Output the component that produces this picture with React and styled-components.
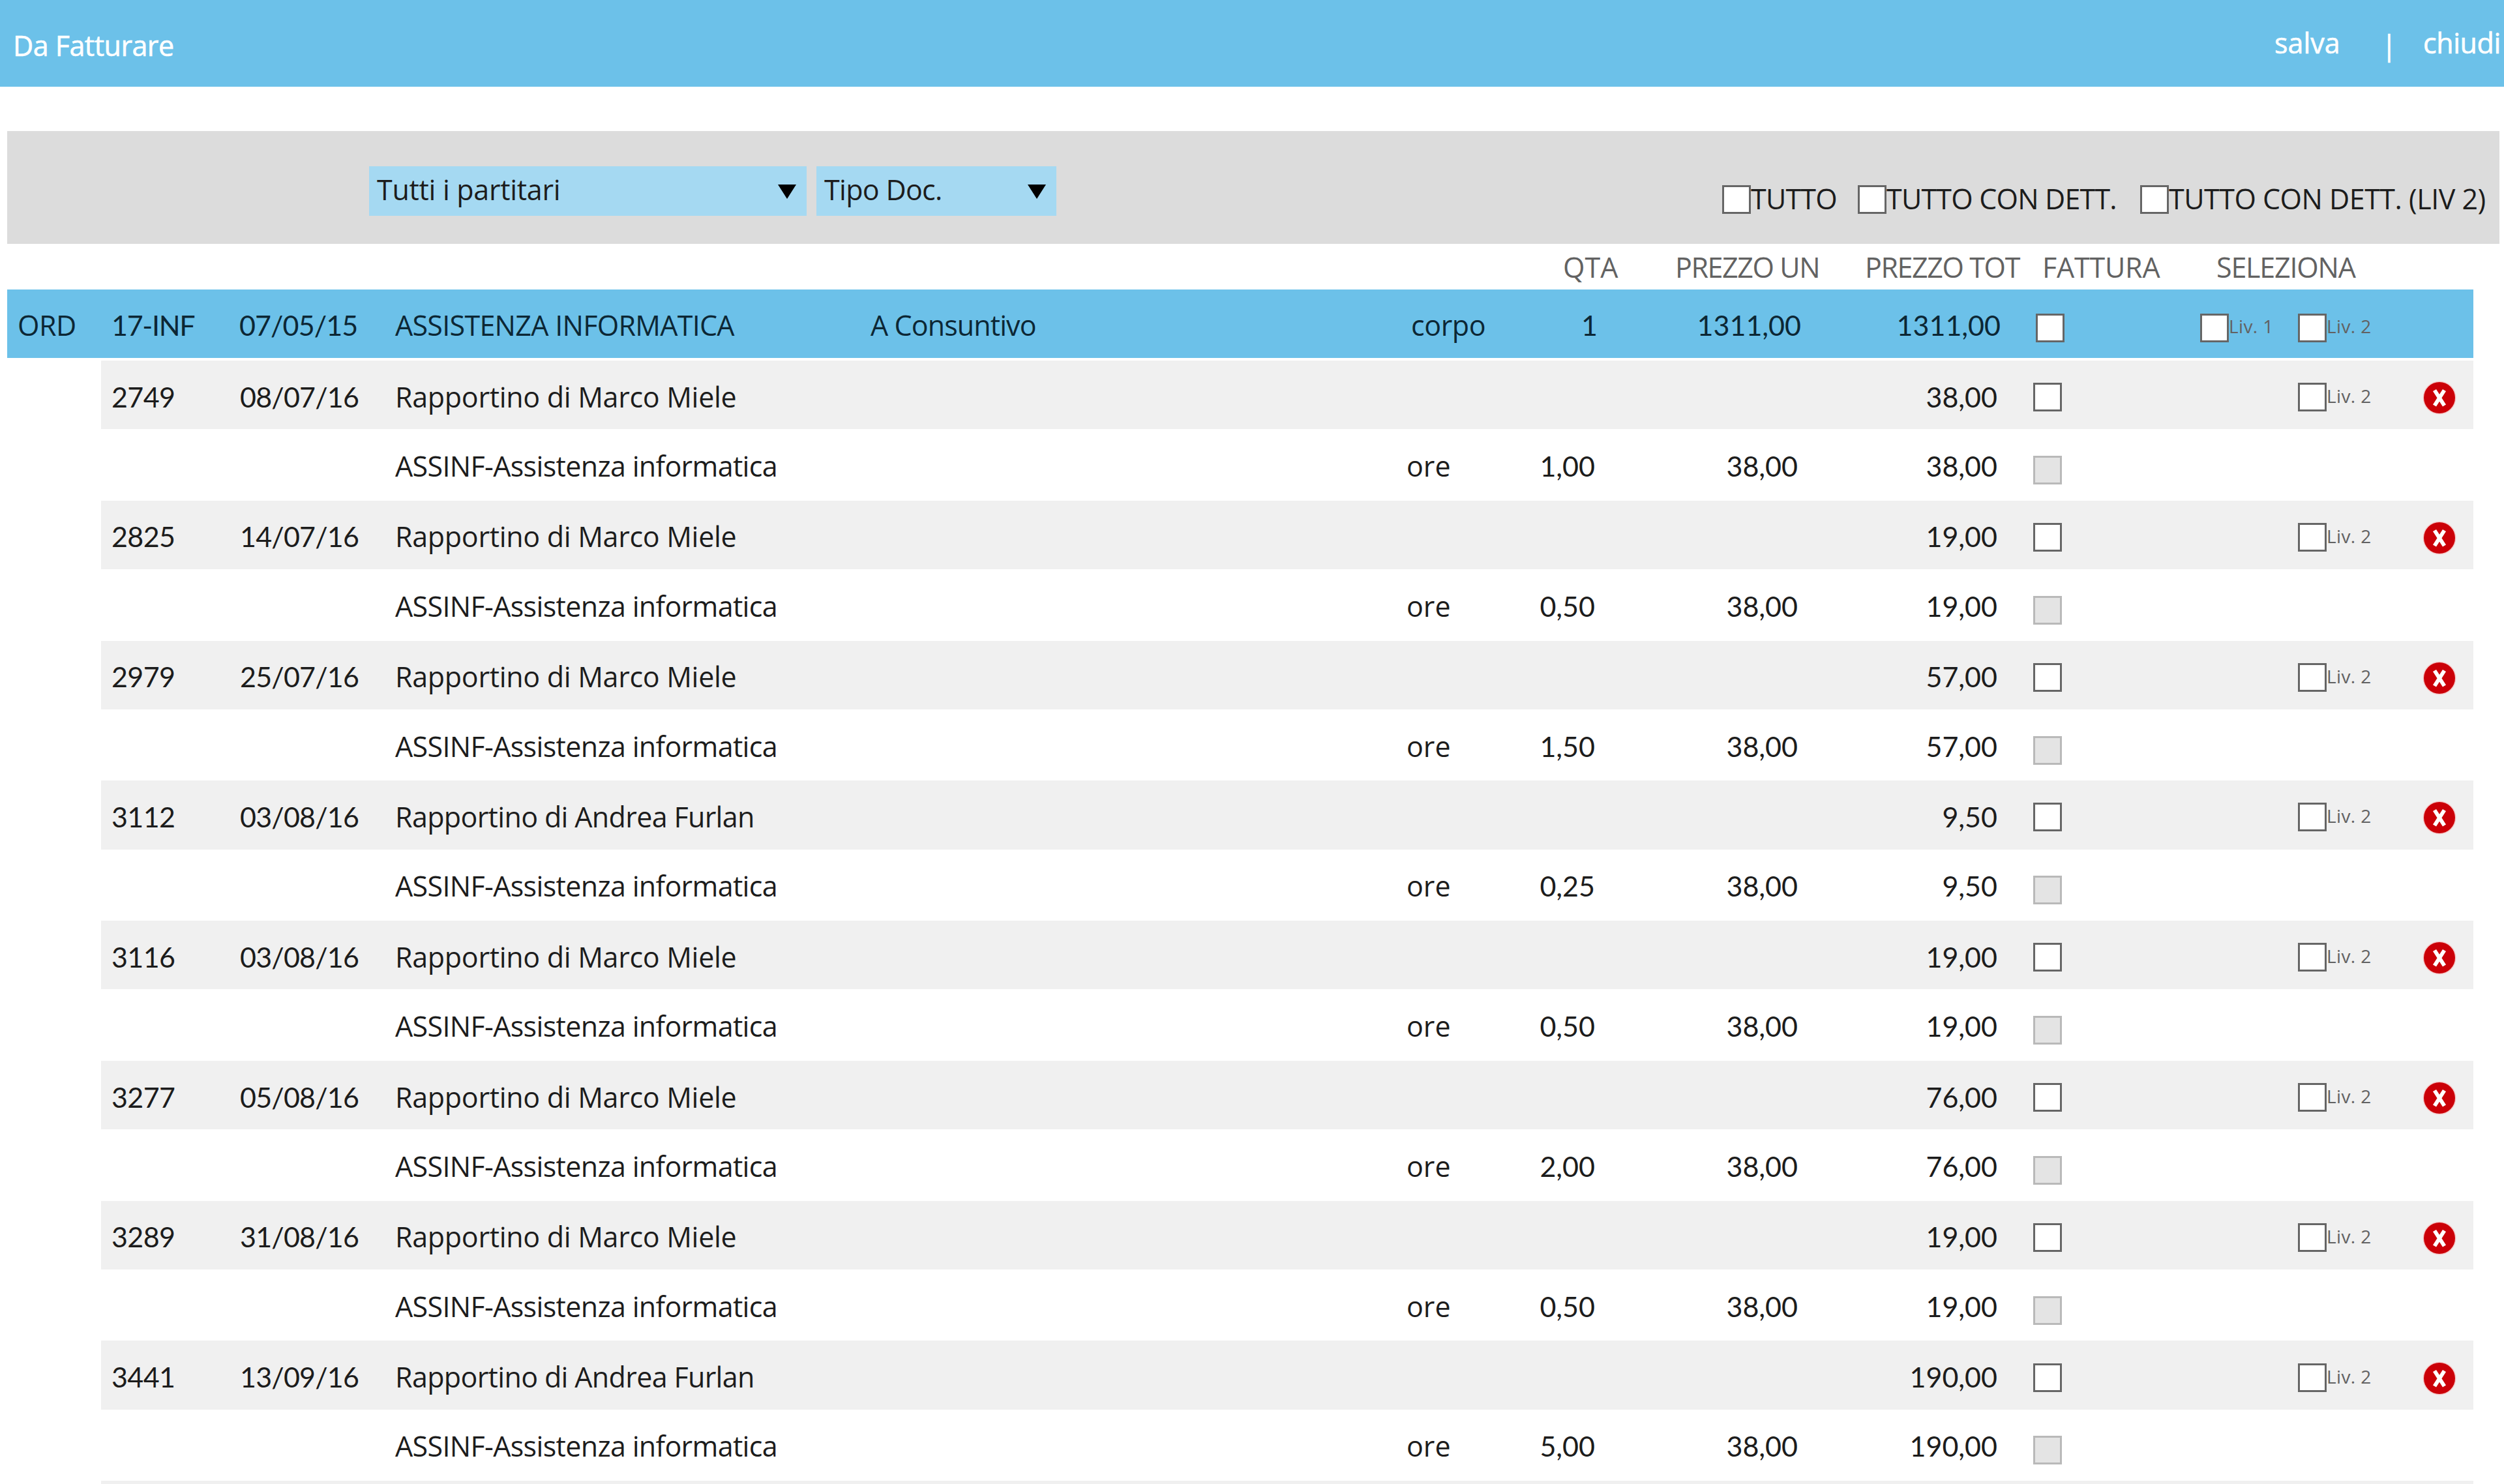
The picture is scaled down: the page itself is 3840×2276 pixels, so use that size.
import React from "react"
import styled, { createGlobalStyle, ThemeProvider } from "styled-components"

const theme = {
  blue: "#6cc1e9",
  lightBlue: "#a5d9f2",
  toolbar: "#dcdcdc",
  stripe: "#f0f0f0",
  text: "#1c1c1c",
  muted: "#626262",
  white: "#fff",
}

const GlobalStyle = createGlobalStyle`
  * {
    box-sizing: border-box;
  }
  body {
    margin: 0;
    background: #fff;
    overflow: hidden;
  }
`

const Page = styled.div`
  width: 3840px;
  height: 2276px;
  overflow: hidden;
  font-family: "Open Sans", "Noto Sans", sans-serif;
  font-size: 43px;
  line-height: 52px;
  color: ${(props) => props.theme.text};
`

const Text = styled.span`
  white-space: nowrap;
  letter-spacing: ${(props) => props.$track || 0}px;
`

const Header = styled.header`
  display: flex;
  justify-content: space-between;
  height: 133px;
  padding: 40px 6px 0 20px;
  background: ${(props) => props.theme.blue};
  color: ${(props) => props.theme.white};
  -webkit-text-stroke: 0.6px;
`

const Title = styled(Text)`
  padding-top: 4px;
`

const Actions = styled.nav`
  display: grid;
  grid-template-columns: 164px 64px 118px;
`

const Separator = styled.span`
  padding-top: 3px;
`

const Toolbar = styled.div`
  display: flex;
  justify-content: space-between;
  height: 173px;
  margin: 68px 7px 0 11px;
  padding: 54px 0 0 555px;
  background: ${(props) => props.theme.toolbar};
`

const Filters = styled.div`
  display: flex;
  gap: 15px;
`

const Select = styled.div`
  display: flex;
  align-items: center;
  justify-content: space-between;
  width: ${(props) => props.$width}px;
  height: 76px;
  padding: 0 16px 4px 12px;
  background: ${(props) => props.theme.lightBlue};
`

const Arrow = styled.svg`
  width: 28px;
  height: 22px;
  margin-top: 6px;
`

const Checks = styled.div`
  display: grid;
  grid-template-columns: 208px 433px 551px;
  align-items: start;
  padding-top: 24px;
`

const Label = styled.label`
  display: flex;
  align-items: center;
`

const Checkbox = styled.span`
  flex: none;
  width: 44px;
  height: 44px;
  margin-top: ${(props) => props.$drop || 0}px;
  border: 3px solid ${(props) => (props.$disabled ? "#b9b9b9" : "#666")};
  background: ${(props) => (props.$disabled ? "#e4e4e4" : props.theme.white)};
`

const Headings = styled.div`
  display: grid;
  grid-template-columns: 172px 291px 272px 267px 1fr;
  align-items: center;
  height: 69px;
  padding: 3px 0 0 2397px;
  color: ${(props) => props.theme.muted};
`

const columns = "210px 239px 729px 823px 100px 194px 312px 306px 306px 150px 193px 76px"

const OrderRow = styled.div`
  display: grid;
  grid-template-columns: 144px ${columns};
  align-items: center;
  width: 3782px;
  height: 105px;
  margin: 1px 0 4px 11px;
  padding-top: 5px;
  background: ${(props) => props.theme.blue};
  color: #0c2735;
`

const ReportRow = styled.div`
  display: grid;
  grid-template-columns: ${columns};
  align-items: center;
  width: 3638px;
  height: 105.2px;
  margin-left: 155px;
  padding-top: 6px;
  background: ${(props) => props.theme.stripe};
`

const DetailRow = styled(ReportRow)`
  height: 109.6px;
  padding-top: 4px;
  background: ${(props) => props.theme.white};
`

const Cell = styled.div`
  grid-column: ${(props) => props.$col || "auto"};
  padding-left: ${(props) => props.$left || 0}px;
  line-height: 52px;
  white-space: nowrap;
  letter-spacing: ${(props) => props.$track || 0}px;
`

const Figure = styled(Cell)`
  font-family: Lato, "Open Sans", sans-serif;
`

const Amount = styled(Figure)`
  padding-right: ${(props) => props.$right || 0}px;
  text-align: right;
`

const CheckCell = styled.div`
  grid-column: ${(props) => props.$col};
  display: flex;
  align-items: center;
  padding-left: ${(props) => props.$left || 0}px;
`

const Level = styled.span`
  margin-top: ${(props) => props.$drop || 0}px;
  font-size: 28px;
  line-height: 32px;
  letter-spacing: 0.4px;
  color: ${(props) => props.theme.muted};
`

const DeleteIcon = styled.svg`
  grid-column: 12;
  width: 52px;
  height: 52px;
  margin-left: -2px;
  margin-top: 3px;
`

const reports = [
  { id: "2749", date: "08/07/16", author: "Marco Miele", qty: "1,00", total: "38,00" },
  { id: "2825", date: "14/07/16", author: "Marco Miele", qty: "0,50", total: "19,00" },
  { id: "2979", date: "25/07/16", author: "Marco Miele", qty: "1,50", total: "57,00" },
  { id: "3112", date: "03/08/16", author: "Andrea Furlan", qty: "0,25", total: "9,50" },
  { id: "3116", date: "03/08/16", author: "Marco Miele", qty: "0,50", total: "19,00" },
  { id: "3277", date: "05/08/16", author: "Marco Miele", qty: "2,00", total: "76,00" },
  { id: "3289", date: "31/08/16", author: "Marco Miele", qty: "0,50", total: "19,00" },
  { id: "3441", date: "13/09/16", author: "Andrea Furlan", qty: "5,00", total: "190,00" },
]

const Dropdown = ({ text, width, track }) => (
  <Select $width={width}>
    <Text $track={track}>{text}</Text>
    <Arrow viewBox="0 0 28 22">
      <path d="M0 0H28L14 22Z" fill="#000" />
    </Arrow>
  </Select>
)

const Delete = () => (
  <DeleteIcon viewBox="0 0 52 52">
    <circle cx="26" cy="26" r="25.5" fill="#f6c9c9" />
    <circle cx="26" cy="26" r="24" fill="#cb0008" />
    <path d="M18.5 14.5L33.5 38M33.5 14.5L18.5 38" stroke="#fff" strokeWidth="6" />
  </DeleteIcon>
)

const Report = ({ id, date, author, qty, total }) => (
  <>
    <ReportRow>
      <Figure $left={16} $track={-0.6}>
        {id}
      </Figure>
      <Figure $left={3} $track={-0.8}>
        {date}
      </Figure>
      <Cell $left={2} $track={author === "Andrea Furlan" ? -0.65 : -0.3}>
        Rapportino di {author}
      </Cell>
      <Amount $col={8} $right={5}>
        {total}
      </Amount>
      <CheckCell $col={9} $left={50}>
        <Checkbox $drop={1} />
      </CheckCell>
      <CheckCell $col={11}>
        <Checkbox $drop={1} />
        <Level $drop={-3}>Liv. 2</Level>
      </CheckCell>
      <Delete />
    </ReportRow>
    <DetailRow>
      <Cell $col={3} $left={2} $track={-0.65}>
        ASSINF-Assistenza informatica
      </Cell>
      <Cell $col={5} $left={1}>
        ore
      </Cell>
      <Amount $right={4}>{qty}</Amount>
      <Amount $right={5}>38,00</Amount>
      <Amount $right={5}>{total}</Amount>
      <CheckCell $col={9} $left={50}>
        <Checkbox $disabled $drop={12} />
      </CheckCell>
    </DetailRow>
  </>
)

const App = () => (
  <ThemeProvider theme={theme}>
    <GlobalStyle />
    <Page>
      <Header>
        <Title $track={-0.5}>Da Fatturare</Title>
        <Actions>
          <Text>salva</Text>
          <Separator>|</Separator>
          <Text $track={-0.4}>chiudi</Text>
        </Actions>
      </Header>
      <Toolbar>
        <Filters>
          <Dropdown text="Tutti i partitari" width={671} track={-0.3} />
          <Dropdown text="Tipo Doc." width={368} track={-0.7} />
        </Filters>
        <Checks>
          <Label>
            <Checkbox $drop={1} />
            <Text $track={-0.8}>TUTTO</Text>
          </Label>
          <Label>
            <Checkbox $drop={1} />
            <Text $track={-0.8}>TUTTO CON DETT.</Text>
          </Label>
          <Label>
            <Checkbox $drop={1} />
            <Text $track={-0.5}>TUTTO CON DETT. (LIV 2)</Text>
          </Label>
        </Checks>
      </Toolbar>
      <Headings>
        <Text>QTA</Text>
        <Text $track={-1.4}>PREZZO UN</Text>
        <Text $track={-1.4}>PREZZO TOT</Text>
        <Text $track={-0.2}>FATTURA</Text>
        <Text $track={-1.2}>SELEZIONA</Text>
      </Headings>
      <OrderRow>
        <Cell $left={16} $track={-0.5}>
          ORD
        </Cell>
        <Figure $left={16} $track={-1.3}>
          17-INF
        </Figure>
        <Figure $left={2} $track={-0.9}>
          07/05/15
        </Figure>
        <Cell $left={2} $track={-0.7}>
          ASSISTENZA INFORMATICA
        </Cell>
        <Cell $left={2} $track={-0.9}>
          A Consuntivo
        </Cell>
        <Cell $left={8} $track={-0.4}>
          corpo
        </Cell>
        <Amount>1</Amount>
        <Amount>1311,00</Amount>
        <Amount>1311,00</Amount>
        <CheckCell $col={10} $left={54}>
          <Checkbox $drop={7} />
        </CheckCell>
        <CheckCell $col={11}>
          <Checkbox $drop={7} />
          <Level $drop={2}>Liv. 1</Level>
        </CheckCell>
        <CheckCell $col={12}>
          <Checkbox $drop={7} />
          <Level $drop={2}>Liv. 2</Level>
        </CheckCell>
      </OrderRow>
      {reports.map((report) => (
        <Report key={report.id} {...report} />
      ))}
      <ReportRow />
    </Page>
  </ThemeProvider>
)

export default App
